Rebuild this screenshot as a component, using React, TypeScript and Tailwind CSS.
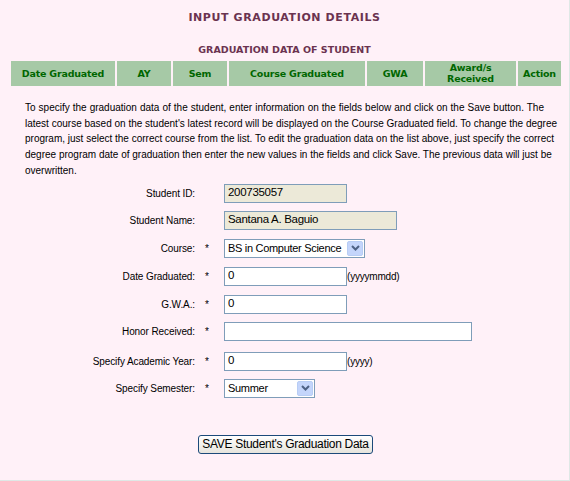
import React from "react"

const cols = [
  { label: "Date Graduated", w: "w-[104px]" },
  { label: "AY", w: "w-[54px]" },
  { label: "Sem", w: "w-[54px]" },
  { label: "Course Graduated", w: "w-[136px]" },
  { label: "GWA", w: "w-[56px]" },
  { label: "Award/s Received", w: "w-[91px]" },
  { label: "Action", w: "w-[43px]" },
]

const helpLines = [
  "To specify the graduation data of the student, enter information on the fields below and click on the Save button. The",
  "latest course based on the student's latest record will be displayed on the Course Graduated field. To change the degree",
  "program, just select the correct course from the list. To edit the graduation data on the list above, just specify the correct",
  "degree program date of graduation then enter the new values in the fields and click Save. The previous data will just be",
]

function Chevron() {
  return (
    <span className="flex h-[15px] w-[16px] shrink-0 items-center justify-center rounded-[2px] border border-[#b8cdf5] bg-[#c4d5fb]">
      <svg width="9" height="6" viewBox="0 0 9 6">
        <path d="M1 1 L4.5 4.5 L8 1" fill="none" stroke="#4d6185" strokeWidth="2" />
      </svg>
    </span>
  )
}

function FakeSelect({ value, w }: { value: string; w: string }) {
  return (
    <div className={`flex h-[19px] ${w} items-center justify-between whitespace-nowrap border border-[#7f9db9] bg-white pl-[3px] pr-[1px] font-['Liberation_Sans',Arial,sans-serif] text-[11px] tracking-[-0.3px] text-black`}>
      <span>{value}</span>
      <Chevron />
    </div>
  )
}

function TextBox({ value, w, gray }: { value?: string; w: string; gray?: boolean }) {
  return (
    <div
      className={`flex h-[19px] ${w} items-center whitespace-nowrap border border-[#7f9db9] px-[3px] font-['Liberation_Sans',Arial,sans-serif] text-[11.5px] tracking-[-0.3px] text-black ${gray ? "bg-[#ece9d8]" : "bg-white"}`}
    >
      {value}
    </div>
  )
}

function Row({ label, req, children, mt }: { label: string; req?: boolean; children: React.ReactNode; mt: string }) {
  return (
    <div className={`flex items-center font-['Liberation_Sans',Arial,sans-serif] text-black ${mt}`}>
      <div className="w-[196px] pr-[1px] text-right text-[10px] tracking-[-0.1px]">{label}</div>
      <div className="w-[28px] pl-[9px] text-[10px]">{req ? "*" : ""}</div>
      {children}
    </div>
  )
}

export default function App() {
  return (
    <div className="h-[481px] w-[570px] overflow-hidden border-b border-r border-[#dfe8e6] bg-[#fff1f8]">
      <h1 className="pt-[10px] text-center font-['DejaVu_Sans',Verdana,sans-serif] text-[11px] font-bold tracking-[0.6px] text-[#6b3350]">
        INPUT GRADUATION DETAILS
      </h1>
      <h2 className="mt-[16px] text-center font-['DejaVu_Sans',Verdana,sans-serif] text-[9.5px] font-bold text-[#6b3350]">
        GRADUATION DATA OF STUDENT
      </h2>
      <div className="ml-[11px] mt-[4px] flex gap-[2px]">
        {cols.map((c) => (
          <div
            key={c.label}
            className={`flex h-[25px] ${c.w} items-center justify-center bg-[#a6c9a6] text-center font-['DejaVu_Sans',Verdana,sans-serif] text-[9.5px] font-bold leading-[11px] tracking-[-0.2px] text-[#006600]`}
          >
            <span className={c.label.startsWith("Award") ? "w-[60px]" : ""}>{c.label}</span>
          </div>
        ))}
      </div>
      <div className="mx-[25px] mt-[14px] font-['Liberation_Sans',Arial,sans-serif] text-[10px] leading-[15.75px] text-black">
        {helpLines.map((l) => (
          <p key={l} className="whitespace-nowrap text-justify [text-align-last:justify]">
            {l}
          </p>
        ))}
        <p>overwritten.</p>
      </div>

      <Row label="Student ID:" mt="mt-[5px]">
        <TextBox value="200735057" w="w-[123px]" gray />
      </Row>
      <Row label="Student Name:" mt="mt-[8px]">
        <TextBox value="Santana A. Baguio" w="w-[173px]" gray />
      </Row>
      <Row label="Course:" req mt="mt-[9px]">
        <FakeSelect value="BS in Computer Science" w="w-[141px]" />
      </Row>
      <Row label="Date Graduated:" req mt="mt-[9px]">
        <TextBox value="0" w="w-[123px]" />
        <span className="text-[10px] tracking-[-0.2px]">(yyyymmdd)</span>
      </Row>
      <Row label="G.W.A.:" req mt="mt-[9px]">
        <TextBox value="0" w="w-[123px]" />
      </Row>
      <Row label="Honor Received:" req mt="mt-[8px]">
        <TextBox w="w-[248px]" />
      </Row>
      <Row label="Specify Academic Year:" req mt="mt-[11px]">
        <TextBox value="0" w="w-[123px]" />
        <span className="text-[10px] tracking-[-0.2px]">(yyyy)</span>
      </Row>
      <Row label="Specify Semester:" req mt="mt-[8px]">
        <FakeSelect value="Summer" w="w-[91px]" />
      </Row>

      <div className="mt-[37px] flex justify-center pl-[2px]">
        <button className="h-[19px] w-[175px] whitespace-nowrap rounded-[3px] border border-[#1c4a7a] bg-gradient-to-b from-white to-[#e6e4dc] font-['Liberation_Sans',Arial,sans-serif] text-[12px] leading-none tracking-[-0.3px] text-black">
          SAVE Student's Graduation Data
        </button>
      </div>
    </div>
  )
}
